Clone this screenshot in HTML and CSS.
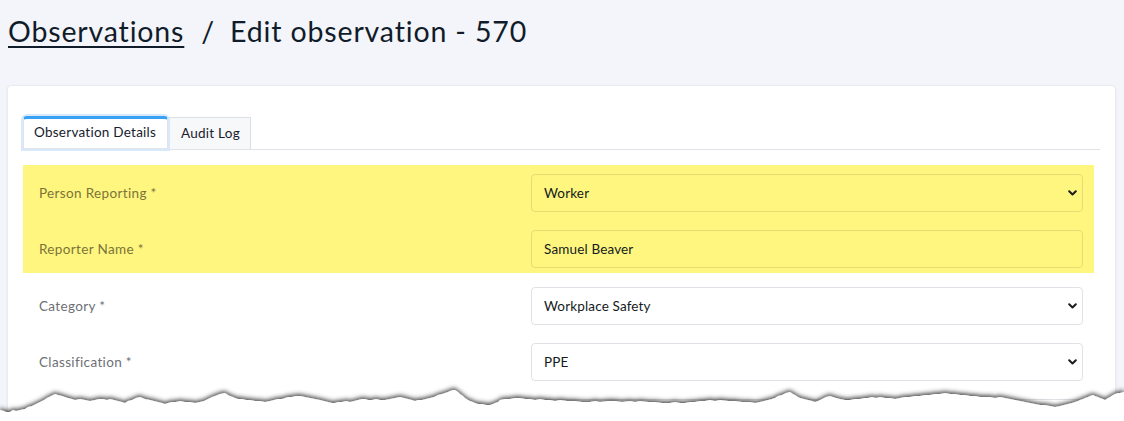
FILE: index.html
```html
<!DOCTYPE html>
<html>
<head>
<meta charset="utf-8">
<link rel="stylesheet" href="styles.css">
</head>
<body>
<div class="page">
  <h1 class="title"><a class="crumb" href="#">Observations</a><span class="sep">/</span><span>Edit observation - 570</span></h1>
  <div class="card">
    <div class="tabs">
      <div class="tab active">Observation Details</div>
      <div class="tab">Audit Log</div>
    </div>
    <div class="form">
      <div class="highlight">
        <div class="row">
          <div class="label">Person Reporting *</div>
          <div class="control select"><span>Worker</span><svg class="chev" width="9" height="6" viewBox="0 0 9 6"><path d="M1.2 1.2 L4.5 4.5 L7.8 1.2" fill="none" stroke="#1c1c1c" stroke-width="2" stroke-linecap="round" stroke-linejoin="round"/></svg></div>
        </div>
        <div class="row">
          <div class="label">Reporter Name *</div>
          <div class="control"><span>Samuel Beaver</span></div>
        </div>
      </div>
      <div class="row">
        <div class="label">Category *</div>
        <div class="control select"><span>Workplace Safety</span><svg class="chev" width="9" height="6" viewBox="0 0 9 6"><path d="M1.2 1.2 L4.5 4.5 L7.8 1.2" fill="none" stroke="#1c1c1c" stroke-width="2" stroke-linecap="round" stroke-linejoin="round"/></svg></div>
      </div>
      <div class="row">
        <div class="label">Classification *</div>
        <div class="control select"><span>PPE</span><svg class="chev" width="9" height="6" viewBox="0 0 9 6"><path d="M1.2 1.2 L4.5 4.5 L7.8 1.2" fill="none" stroke="#1c1c1c" stroke-width="2" stroke-linecap="round" stroke-linejoin="round"/></svg></div>
      </div>
      <div class="row">
        <div class="label">&nbsp;</div>
        <div class="control"><span>&nbsp;</span></div>
      </div>
    </div>
  </div>
  <svg class="torn" width="1124" height="40" viewBox="0 0 1124 40">
    <defs>
      <filter id="sh" x="-5%" y="-60%" width="110%" height="200%">
        <feGaussianBlur in="SourceAlpha" stdDeviation="2" result="b"/>
        <feOffset in="b" dy="-2" result="o"/>
        <feFlood flood-color="#333333" flood-opacity="0.85"/>
        <feComposite in2="o" operator="in" result="s"/>
        <feMerge><feMergeNode in="s"/><feMergeNode in="SourceGraphic"/></feMerge>
      </filter>
    </defs>
    <polygon filter="url(#sh)" fill="#ffffff" points="0,29 4,30 6,31 10,31 13,29 16,30 20,29 25,28 28,26 32,25 36,23 40,21 44,19 47,17 51,15 55,13 58,14 62,15 65,16 68,17 72,18 75,19 80,18 85,19 90,20 95,19 99,18 103,18 107,19 110,18 114,19 118,20 122,21 125,22 128,20 132,19 136,17 140,16 145,18 150,19 154,20 158,21 162,22 165,23 168,22 172,21 176,21 180,20 185,21 190,21 195,22 200,21 204,20 208,18 212,16 215,15 220,13 225,12 228,14 230,15 233,16 235,17 238,18 242,18 246,19 250,19 255,20 260,20 265,21 270,20 274,19 278,18 282,18 285,17 288,16 292,16 296,15 300,15 305,16 310,17 315,18 320,19 324,20 328,21 332,22 335,22 338,21 342,21 346,20 350,21 354,20 358,19 362,18 365,18 368,19 372,19 376,18 380,19 385,19 390,18 395,17 400,16 404,17 408,18 412,19 415,20 418,19 422,19 426,18 430,17 434,16 438,14 442,13 445,12 448,11 450,10 453,9 455,9 458,11 460,13 463,15 465,17 468,19 470,20 473,21 475,22 478,23 482,23 486,24 490,24 493,23 495,22 498,21 500,19 505,18 510,18 515,17 520,17 525,18 530,18 535,19 540,18 545,19 550,19 555,20 560,19 567,20 575,20 582,21 590,21 595,20 600,21 608,20 615,20 622,21 630,20 635,21 640,20 648,21 655,21 662,22 670,22 675,21 680,22 685,22 690,21 695,21 700,20 705,20 710,19 715,20 720,19 728,20 735,20 742,21 750,21 755,22 760,21 764,20 768,19 772,18 775,17 778,15 782,14 786,12 790,11 793,13 795,14 798,16 800,17 804,18 808,19 812,20 815,21 818,20 822,18 826,16 830,15 833,16 836,17 840,18 845,19 850,19 855,18 860,18 865,17 868,17 872,16 876,17 880,16 885,17 890,17 895,18 900,17 905,16 910,16 915,15 920,15 925,14 930,14 935,13 940,13 945,12 950,13 955,13 960,14 965,14 970,15 975,15 980,16 985,16 990,16 995,17 1000,16 1005,17 1010,18 1015,19 1020,20 1025,21 1030,22 1035,23 1040,24 1045,24 1050,25 1055,26 1060,25 1064,24 1068,23 1072,22 1075,21 1078,20 1080,19 1083,18 1085,17 1088,16 1090,15 1093,14 1095,15 1098,16 1100,17 1103,18 1105,19 1108,17 1110,16 1113,14 1115,13 1118,12 1120,12 1124,11 1124,40 0,40"/>
  </svg>
</div>
</body>
</html>
```
FILE: styles.css
```css
* { box-sizing: border-box; }
html, body { margin: 0; padding: 0; }
body {
  background: #f4f5fa;
  font-family: Lato, "Open Sans", Arial, sans-serif;
  color: #15202b;
}
.page {
  position: relative;
  width: 1124px;
  height: 421px;
  overflow: hidden;
}
.title {
  margin: 0;
  padding: 13px 0 0 8px;
  height: 85px;
  font-size: 28.5px;
  font-weight: 400;
  line-height: 36px;
  color: #111c2a;
  letter-spacing: 0.85px;
}
.crumb {
  color: #111c2a;
  text-decoration: underline;
  text-underline-offset: 4px;
  text-decoration-thickness: 2px;
}
.sep { margin: 0 15px 0 17px; }
.card {
  margin-left: 7px;
  width: 1109px;
  height: 400px;
  background: #ffffff;
  border: 1px solid #e9ebf1;
  border-radius: 4px;
  box-shadow: 0 1px 3px rgba(30, 40, 80, 0.06);
  padding: 31px 15px 0 15px;
}
.tabs {
  display: flex;
  align-items: flex-end;
  border-bottom: 1px solid #e1e3e8;
  height: 33px;
}
.tab {
  font-size: 13.5px;
  line-height: 18px;
  letter-spacing: 0.25px;
  padding: 6px 10px 7px 11px;
  color: #17212d;
  background: #f7f8fa;
  border: 1px solid #dcdfe4;
  border-bottom: none;
  height: 32px;
}
.tab.active {
  background: #ffffff;
  border: 1px solid #e1e3e8;
  border-top: 3px solid #38a1f3;
  border-radius: 4px 4px 0 0;
  box-shadow: 0 0 0 2px #d7e9fb;
  padding: 4px 8px 7px 10px;
  margin-right: 1px;
  width: 145px;
  height: 33px;
  position: relative;
  z-index: 1;
}
.form {
  margin-top: 15px;
  display: flex;
  flex-direction: column;
  gap: 18px;
  width: 1071px;
}
.highlight {
  background: #fff67f;
  padding: 9px 0 5px 0;
  display: flex;
  flex-direction: column;
  gap: 18px;
  margin-bottom: -4px;
}
.row {
  display: grid;
  grid-template-columns: 508px 552px;
  align-items: center;
}
.label {
  padding-left: 16px;
  font-size: 13.5px;
  letter-spacing: 0.35px;
  color: #6d7075;
}
.highlight .label { color: #7b7439; }
.control {
  height: 38px;
  border: 1px solid #dfe2e6;
  border-radius: 4px;
  display: flex;
  align-items: center;
  justify-content: space-between;
  padding: 0 5px 0 12px;
  font-size: 13.5px;
  letter-spacing: 0.15px;
  color: #141b22;
  background: #ffffff;
}
.highlight .control {
  background: transparent;
  border-color: #e6dc74;
}
.chev { display: block; }
.torn {
  position: absolute;
  left: 0;
  top: 381px;
}
```
